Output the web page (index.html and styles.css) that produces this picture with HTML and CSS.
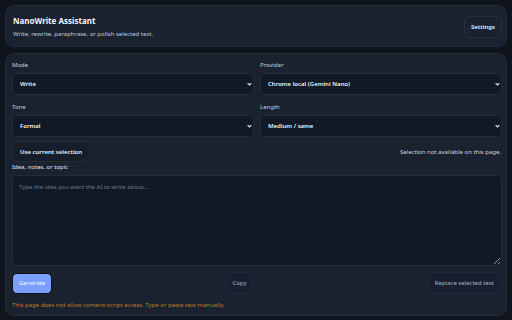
FILE: index.html
```html
<!DOCTYPE html>
<html lang="en">
<head>
  <meta charset="UTF-8" />
  <title>NanoWrite Assistant</title>
  <link rel="stylesheet" href="styles.css">
</head>
<body>
  <header class="card header">
    <div>
      <h1>NanoWrite Assistant</h1>
      <p class="sub">Write, rewrite, paraphrase, or polish selected text.</p>
    </div>
    <button class="btn">Settings</button>
  </header>

  <main class="card main">
    <div class="grid">
      <div class="field">
        <span class="label">Mode</span>
        <div class="select-wrap">
          <select><option>Write</option></select>
          <svg class="chev" viewBox="0 0 8 5"><path d="M1 1l3 3 3-3" /></svg>
        </div>
      </div>
      <div class="field">
        <span class="label">Provider</span>
        <div class="select-wrap">
          <select><option>Chrome local (Gemini Nano)</option></select>
          <svg class="chev" viewBox="0 0 8 5"><path d="M1 1l3 3 3-3" /></svg>
        </div>
      </div>
      <div class="field">
        <span class="label">Tone</span>
        <div class="select-wrap">
          <select><option>Formal</option></select>
          <svg class="chev" viewBox="0 0 8 5"><path d="M1 1l3 3 3-3" /></svg>
        </div>
      </div>
      <div class="field">
        <span class="label">Length</span>
        <div class="select-wrap">
          <select><option>Medium / same</option></select>
          <svg class="chev" viewBox="0 0 8 5"><path d="M1 1l3 3 3-3" /></svg>
        </div>
      </div>
    </div>

    <div class="row">
      <button class="btn strong">Use current selection</button>
      <span class="note">Selection not available on this page.</span>
    </div>

    <div class="field grow">
      <span class="label plain">Idea, notes, or topic</span>
      <textarea placeholder="Type the idea you want the AI to write about..."></textarea>
    </div>

    <div class="actions">
      <button class="btn primary">Generate</button>
      <button class="btn muted">Copy</button>
      <button class="btn muted">Replace selected text</button>
    </div>

    <p class="status">This page does not allow content-script access. Type or paste text manually.</p>
  </main>
</body>
</html>
```

FILE: styles.css
```css
* {
  box-sizing: border-box;
}

html, body {
  margin: 0;
  padding: 0;
  height: 100%;
}

body {
  background: #0f141d;
  color: #e6ebf2;
  font-family: 'Noto Sans', 'Open Sans', sans-serif;
  font-size: 6px;
  padding: 5px 5px 4px;
  display: flex;
  flex-direction: column;
  gap: 6px;
}

.card {
  background: #1a2230;
  border: 1px solid #242d3c;
  border-radius: 9px;
}

.header {
  display: flex;
  align-items: center;
  justify-content: space-between;
  padding: 6px 4px 5px 7px;
  height: 42px;
}

h1 {
  margin: 0;
  font-size: 8px;
  font-weight: 700;
  color: #f4f6fa;
}

.sub {
  margin: 4px 0 0;
  font-size: 6px;
  color: #c0c8d4;
}

.btn {
  font-family: inherit;
  font-size: 6px;
  background: #1a2230;
  border: 1px solid #263041;
  border-radius: 5px;
  color: #eef1f6;
  padding: 0 6px;
  height: 22px;
  cursor: pointer;
}

.header .btn {
  font-weight: 600;
  padding: 0 6px;
}

.main {
  flex: 1;
  padding: 7px 4px 6px 6px;
  display: flex;
  flex-direction: column;
}

.grid {
  display: grid;
  grid-template-columns: 1fr 1fr;
  column-gap: 6px;
  row-gap: 8px;
}

.field {
  display: flex;
  flex-direction: column;
  gap: 3px;
}

.label {
  color: #c8ced8;
  font-size: 6px;
  line-height: 9px;
}

.label.plain {
  color: #e0e5ec;
}

.select-wrap {
  position: relative;
  display: flex;
}

select {
  flex: 1;
  appearance: none;
  font-family: inherit;
  font-size: 6px;
  font-weight: 600;
  color: #f2f4f8;
  background: #111826;
  border: 1px solid #222b3a;
  border-radius: 5px;
  height: 22px;
  padding: 0 7px;
}

.chev {
  position: absolute;
  right: 2px;
  top: 9px;
  width: 5px;
  height: 4px;
  fill: none;
  stroke: #e6ebf2;
  stroke-width: 1.8;
  pointer-events: none;
}

.row {
  display: flex;
  align-items: center;
  justify-content: space-between;
  margin-top: 4px;
}

.btn.strong {
  font-weight: 600;
  background: #161e2b;
  border-color: #222b3a;
  height: 21px;
  padding: 0 7px;
}

.note {
  color: #cdd3dc;
  font-size: 6px;
  padding-right: 1px;
}

.grow {
  flex: 1;
  margin-top: 1px;
}

textarea {
  flex: 1;
  resize: vertical;
  font-family: inherit;
  font-size: 6px;
  background: #111826;
  border: 1px solid #222b3a;
  border-radius: 5px;
  color: #e6ebf2;
  padding: 7px 6px;
}

textarea::placeholder {
  color: #6f7886;
}

.actions {
  display: flex;
  justify-content: space-between;
  align-items: center;
  margin-top: 6px;
}

.actions .btn.muted {
  background: #182030;
  border-color: #1f2838;
  color: #aab3c0;
  padding: 0 5px;
}

.actions .btn.muted:last-child {
  padding: 0 7px;
}

.btn.primary {
  background: #7a9fff;
  border: 1px solid #0b0f17;
  color: #f6f8ff;
  height: 21px;
}

.status {
  margin: 7px 0 0;
  color: #bd7a20;
  font-size: 6px;
}
```
